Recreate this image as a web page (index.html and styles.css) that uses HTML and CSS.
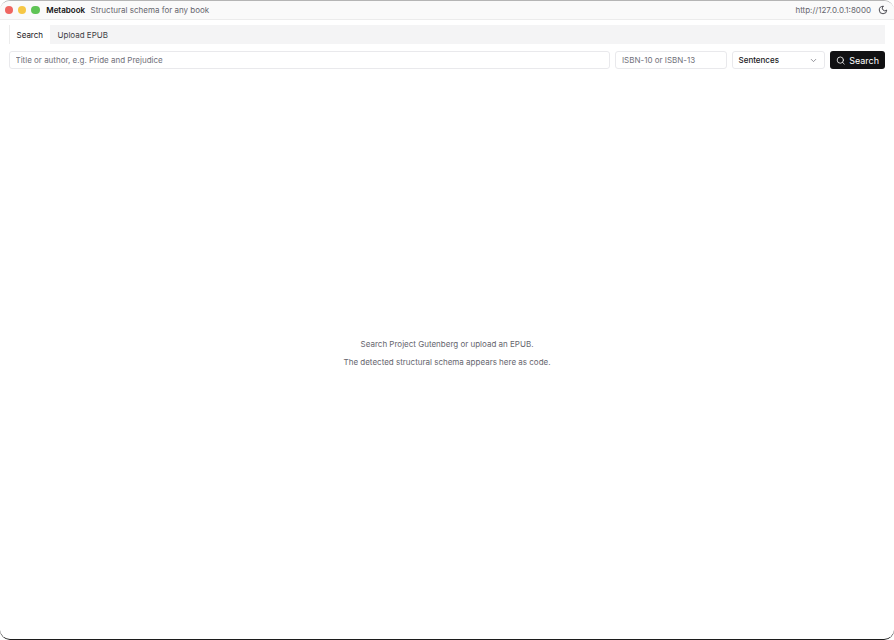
FILE: index.html
```html
<!DOCTYPE html>
<html lang="en">
<head>
    <meta charset="UTF-8">
    <title>Metabook</title>
    <link rel="stylesheet" href="styles.css">
</head>
<body>

    <div class="window">
        <header class="titlebar">
            <div class="lights">
                <span class="light red"></span>
                <span class="light yellow"></span>
                <span class="light green"></span>
            </div>
            <span class="app-name">Metabook</span>
            <span class="app-tagline">Structural schema for any book</span>
            <span class="url">http://127.0.0.1:8000</span>
            <button class="theme-toggle" aria-label="Toggle theme">
                <svg width="10" height="10" viewBox="0 0 24 24" fill="none" stroke="#3f3f46" stroke-width="2.2" stroke-linecap="round" stroke-linejoin="round">
                    <path d="M12 3a6 6 0 0 0 9 9 9 9 0 1 1-9-9Z"/>
                </svg>
            </button>
        </header>

        <main class="content">
            <div class="tabs">
                <button class="tab active">Search</button>
                <button class="tab">Upload EPUB</button>
            </div>

            <form class="search-row">
                <input class="field field-title" type="text" placeholder="Title or author, e.g. Pride and Prejudice">
                <input class="field field-isbn" type="text" placeholder="ISBN-10 or ISBN-13">
                <div class="select">
                    <span>Sentences</span>
                    <svg width="9" height="9" viewBox="0 0 24 24" fill="none" stroke="#71717a" stroke-width="2" stroke-linecap="round" stroke-linejoin="round">
                        <path d="m6 9 6 6 6-6"/>
                    </svg>
                </div>
                <button class="search-button" type="button">
                    <svg width="11" height="11" viewBox="0 0 24 24" fill="none" stroke="#fff" stroke-width="2" stroke-linecap="round" stroke-linejoin="round">
                        <circle cx="11" cy="11" r="8"/>
                        <path d="m21 21-4.3-4.3"/>
                    </svg>
                    Search
                </button>
            </form>

            <div class="empty">
                <p>Search Project Gutenberg or upload an EPUB.</p>
                <p>The detected structural schema appears here as code.</p>
            </div>
        </main>
    </div>

</body>
</html>
```

FILE: styles.css
```css
* {
    box-sizing: border-box;
}

html, body {
    height: 100%;
    margin: 0;
}

body {
    font-family: 'Inter', 'Liberation Sans', sans-serif;
    background-color: #fff;
    color: #18181b;
}

.window {
    display: flex;
    flex-direction: column;
    height: 640px;
    background-color: #fff;
    border-top: 1px solid #b5b5b5;
    border-bottom: 1px solid #1c1c1c;
    border-radius: 10px;
    overflow: hidden;
}

.titlebar {
    display: flex;
    align-items: center;
    height: 19px;
    padding: 0 6px 0 4.5px;
    background-color: #fafafa;
    border-bottom: 1px solid #ececec;
    flex-shrink: 0;
}

.lights {
    display: flex;
    gap: 4.6px;
    margin-right: 6.5px;
}

.light {
    width: 8.7px;
    height: 8.7px;
    border-radius: 50%;
}

.red { background-color: #ef6560; }
.yellow { background-color: #f6c745; }
.green { background-color: #5fc455; }

.app-name {
    font-size: 8px;
    font-weight: 600;
    color: #111;
    margin-right: 5.5px;
}

.app-tagline {
    font-size: 8px;
    color: #66666e;
}

.url {
    margin-left: auto;
    font-size: 8px;
    color: #66666e;
}

.theme-toggle {
    display: flex;
    align-items: center;
    justify-content: center;
    width: 10px;
    height: 10px;
    margin-left: 7px;
    padding: 0;
    border: none;
    background: none;
}

.content {
    display: flex;
    flex-direction: column;
    flex: 1;
    padding: 5px 9px 0;
}

.tabs {
    display: flex;
    height: 19px;
    background-color: #f4f4f5;
    flex-shrink: 0;
}

.tab {
    padding: 0 8px;
    font-family: inherit;
    font-size: 8px;
    color: #3f3f46;
    background: none;
    border: none;
}

.tab.active {
    padding: 0 6.5px;
    color: #18181b;
    background-color: #fff;
    border-left: 1px solid #ececec;
}

.search-row {
    display: flex;
    gap: 5px;
    height: 18px;
    margin-top: 7px;
    flex-shrink: 0;
}

.field {
    height: 100%;
    padding: 0 5.5px;
    font-family: inherit;
    font-size: 8px;
    color: #18181b;
    background-color: #fff;
    border: 1px solid #e9e9ec;
    border-radius: 3px;
}

.field::placeholder {
    color: #71717a;
    opacity: 1;
}

.field-title {
    flex: 1;
    min-width: 0;
}

.field-isbn {
    width: 111.6px;
}

.select {
    display: flex;
    align-items: center;
    justify-content: space-between;
    width: 92.7px;
    padding: 0 6px 0 5.5px;
    font-size: 8px;
    font-weight: 500;
    border: 1px solid #e9e9ec;
    border-radius: 3px;
}

.search-button {
    display: flex;
    align-items: center;
    justify-content: center;
    gap: 4px;
    width: 55.3px;
    font-family: inherit;
    font-size: 9px;
    color: #fff;
    background-color: #111113;
    border: none;
    border-radius: 3px;
}

.empty {
    display: flex;
    flex-direction: column;
    align-items: center;
    justify-content: center;
    flex: 1;
    gap: 9px;
    padding-bottom: 1px;
    font-size: 8px;
    line-height: 9px;
    color: #66666e;
}

.empty p {
    margin: 0;
}
```
